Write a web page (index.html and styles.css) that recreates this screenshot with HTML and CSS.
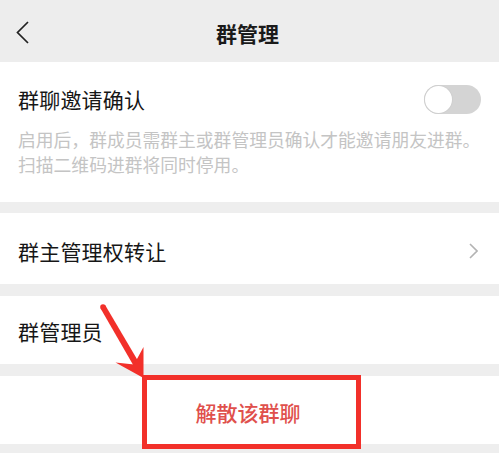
FILE: index.html
```html
<!DOCTYPE html>
<html lang="zh-CN">
<head>
<meta charset="utf-8">
<link rel="stylesheet" href="styles.css">
</head>
<body>
<div class="page">
  <header class="nav">
    <svg class="back" width="14" height="24" viewBox="0 0 14 24"><path d="M12 1 L1.5 11.5 L12 22" fill="none" stroke="#222" stroke-width="1.7"/></svg>
    <div class="nav-title">群管理</div>
  </header>

  <section class="card invite">
    <div class="invite-row">
      <div class="label">群聊邀请确认</div>
      <div class="switch"><div class="knob"></div></div>
    </div>
    <div class="desc">启用后，群成员需群主或群管理员确认才能邀请朋友进群。<br>扫描二维码进群将同时停用。</div>
  </section>

  <section class="card row row-transfer">
    <div class="label">群主管理权转让</div>
    <svg class="chev" width="9" height="16" viewBox="0 0 9 16"><path d="M1 1 L8 8 L1 15" fill="none" stroke="#b3b3b3" stroke-width="1.6"/></svg>
  </section>

  <section class="card row row-admin">
    <div class="label">群管理员</div>
  </section>

  <section class="card row row-dissolve">
    <div class="danger">解散该群聊</div>
  </section>

  <div class="mark-box"></div>
  <svg class="mark-arrow" width="499" height="453" viewBox="0 0 499 453">
    <path d="M100.6 308.4 L105.4 305.6 L140 364.2 L134.6 367.6 Z" fill="#f2302a"/>
    <path d="M143.5 378 L115.5 362.5 L134 364.5 L143.5 347 Z" fill="#f2302a"/>
    <circle cx="103" cy="307" r="2.8" fill="#f2302a"/>
  </svg>
</div>
</body>
</html>
```

FILE: styles.css
```css
* { box-sizing: border-box; }
html, body { margin: 0; padding: 0; }
body {
  background: #eeeeee;
  font-family: "Noto Sans CJK SC", "Noto Sans", sans-serif;
  color: #161616;
}
.page {
  position: relative;
  width: 499px;
  height: 453px;
  overflow: hidden;
}
.nav {
  height: 62px;
  background: #ededed;
  display: flex;
  align-items: center;
  justify-content: center;
  position: relative;
}
.back {
  position: absolute;
  left: 16px;
  top: 21px;
}
.nav-title {
  font-size: 21px;
  font-weight: 700;
  color: #1a1a1a;
  line-height: 28px;
  margin-top: 4px;
  margin-right: 4px;
}
.card {
  background: #ffffff;
}
.label {
  font-size: 21px;
  line-height: 30px;
  letter-spacing: 0.2px;
}
.invite {
  padding: 22px 18px 25px 18px;
}
.invite-row {
  display: flex;
  align-items: center;
  justify-content: space-between;
}
.switch {
  width: 57px;
  height: 29px;
  border-radius: 15px;
  background: #d4d4d4;
  padding: 1px;
}
.knob {
  width: 27px;
  height: 27px;
  border-radius: 50%;
  background: #ffffff;
  box-shadow: 0 0 0 1px #cfcfcf;
}
.desc {
  margin-top: 13px;
  font-size: 17.8px;
  line-height: 25px;
  color: #c4c4c4;
  white-space: nowrap;
}
.row {
  display: flex;
  align-items: center;
  padding: 0 21px 0 18px;
}
.row-transfer {
  margin-top: 11px;
  height: 71px;
  justify-content: space-between;
  padding-top: 4px;
}
.row-admin {
  margin-top: 12px;
  height: 68px;
  padding-top: 2px;
}
.row-dissolve {
  margin-top: 12px;
  height: 68px;
  justify-content: center;
  padding-top: 3px;
}
.danger {
  font-size: 21px;
  line-height: 30px;
  color: #e0504c;
  font-weight: 500;
}
.mark-box {
  position: absolute;
  left: 142px;
  top: 375px;
  width: 219px;
  height: 74px;
  border: 5px solid #f2302a;
}
.mark-arrow {
  position: absolute;
  left: 0;
  top: 0;
  pointer-events: none;
}
```
